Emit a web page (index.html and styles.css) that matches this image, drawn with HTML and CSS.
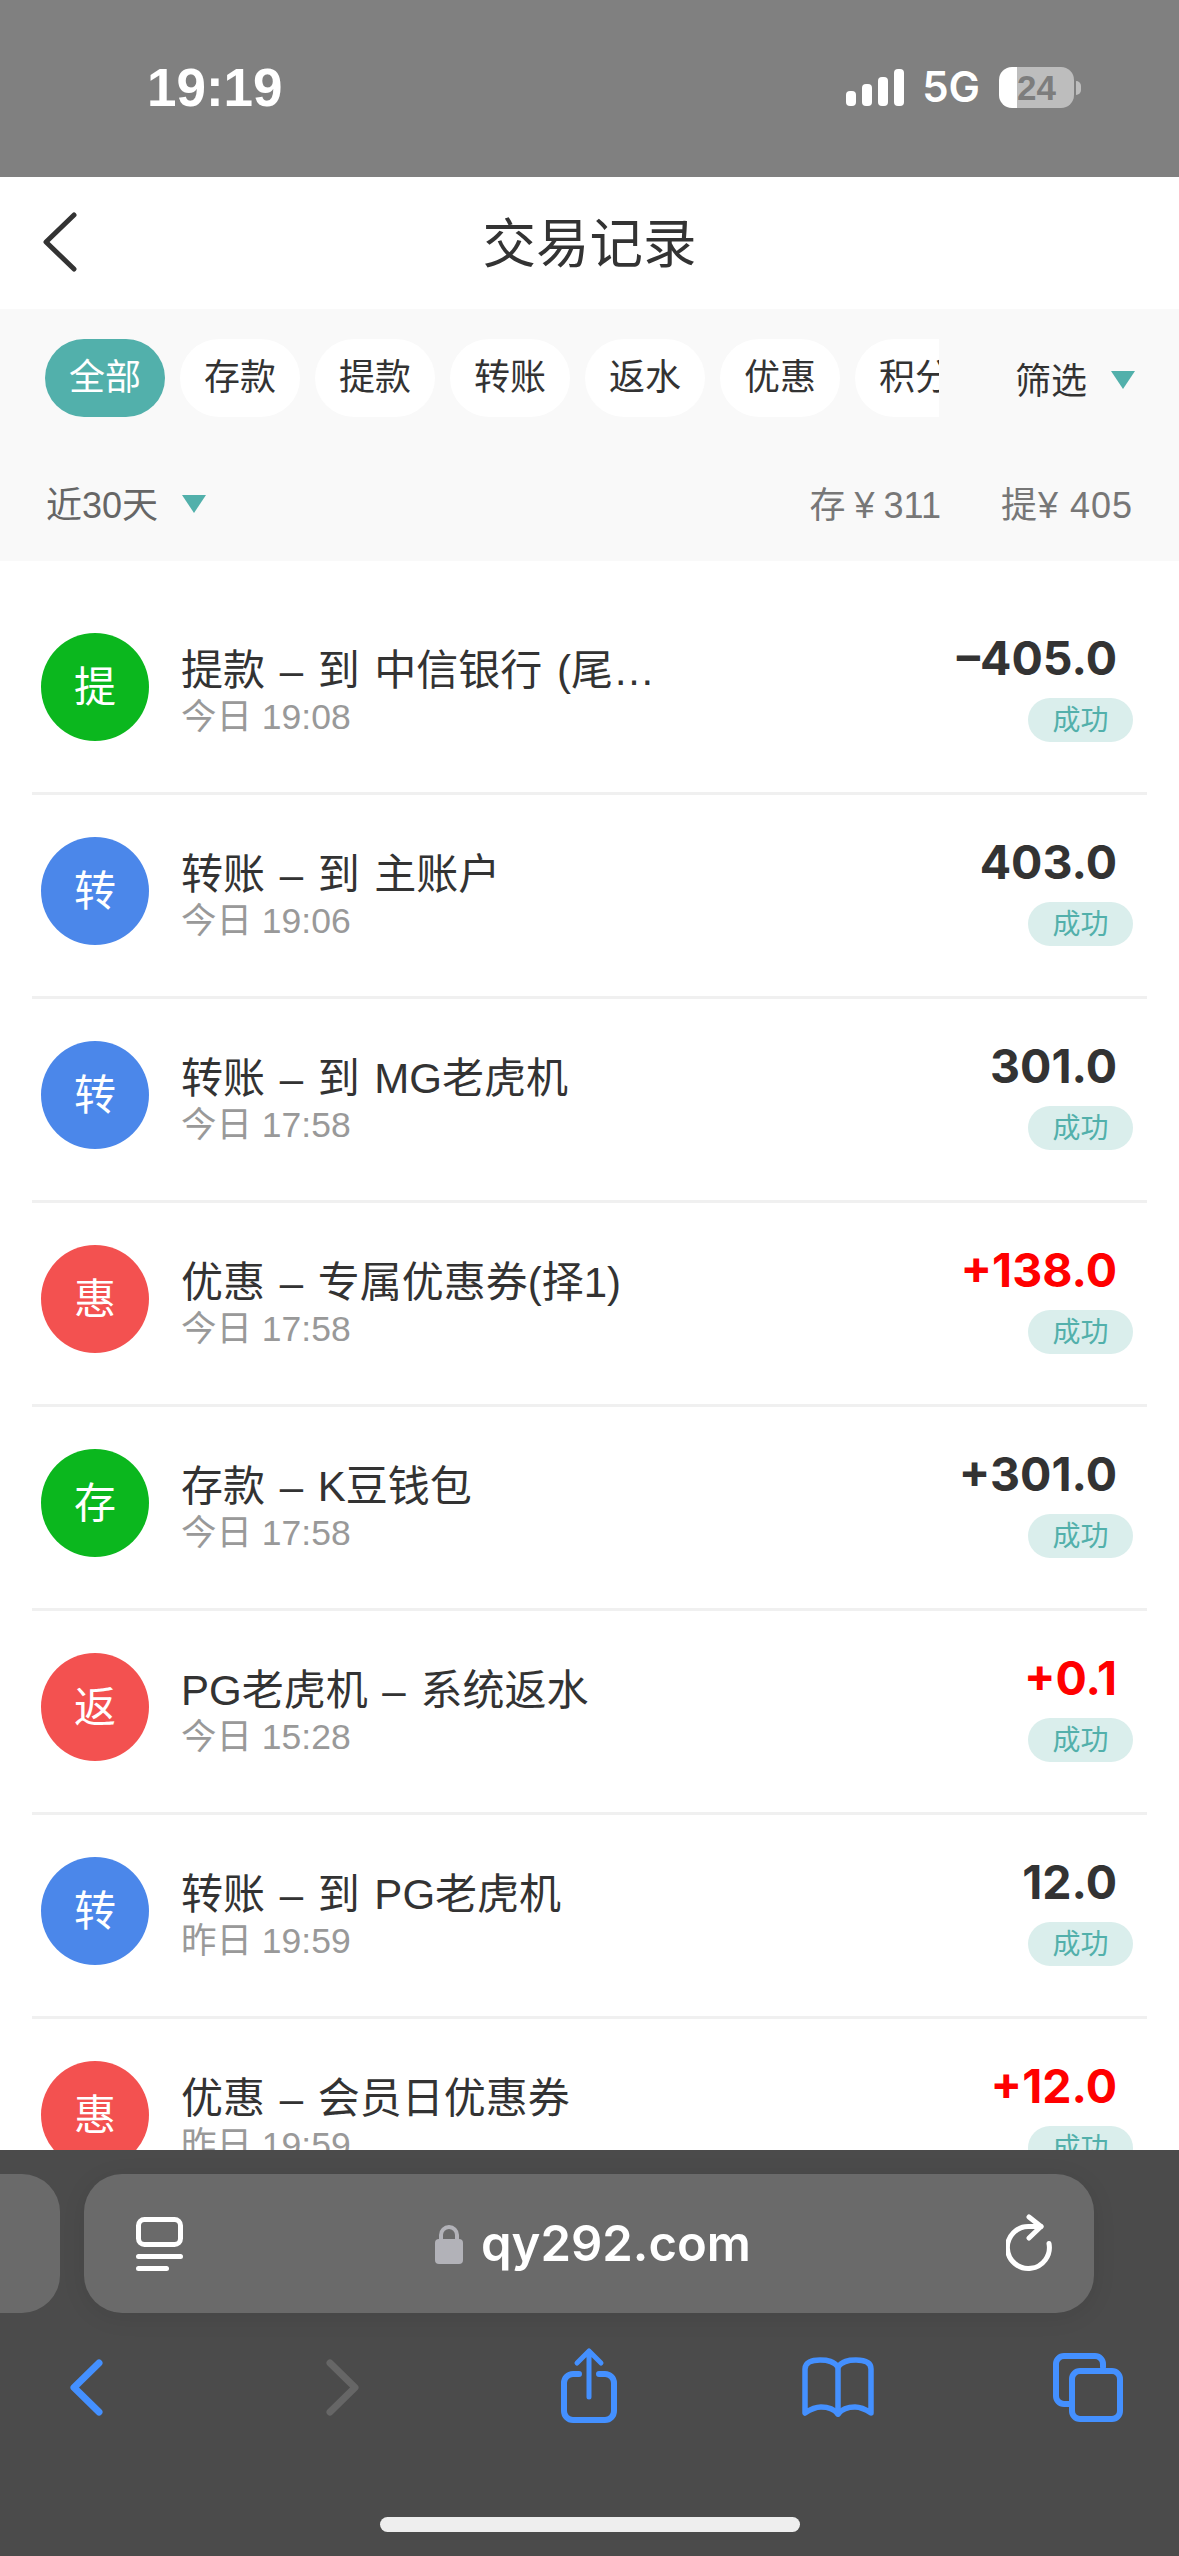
FILE: index.html

```html
<!DOCTYPE html>
<html lang="zh-CN">
<head>
  <meta charset="UTF-8" />
  <meta name="viewport" content="width=device-width, initial-scale=1" />
  <title>交易记录</title>
  <link rel="stylesheet" href="styles.css">
</head>
<body>
  <div class="page">
    <div class="status-bar">
      <span class="clock">19:19</span>
      <div class="status-right">
        <svg class="signal" width="58" height="37" viewBox="0 0 58 37">
          <rect x="0" y="22" width="10" height="15" rx="4" fill="#fff" />
          <rect x="16" y="15" width="10" height="22" rx="4" fill="#fff" />
          <rect x="32" y="8" width="10" height="29" rx="4" fill="#fff" />
          <rect x="48" y="0" width="10" height="37" rx="4" fill="#fff" />
        </svg>
        <span class="network">5G</span>
        <div class="battery"><span class="battery-level">24</span></div>
        <span class="battery-nub"></span>
      </div>
    </div>

    <div class="header">
      <svg class="back" width="36" height="60" viewBox="0 0 36 60">
        <polyline points="33,3 5,30 33,57" fill="none" stroke="#333" stroke-width="5" stroke-linecap="round" stroke-linejoin="round" />
      </svg>
      <h1>交易记录</h1>
    </div>

    <div class="filters">
      <div class="filter-top">
        <div class="chips">
          <span class="chip active">全部</span>
          <span class="chip">存款</span>
          <span class="chip">提款</span>
          <span class="chip">转账</span>
          <span class="chip">返水</span>
          <span class="chip">优惠</span>
          <span class="chip">积分</span>
        </div>
        <span class="filter-btn">筛选</span>
        <span class="caret caret-filter"></span>
      </div>
      <div class="filter-bottom">
        <span class="range">近30天</span>
        <span class="caret caret-range"></span>
        <span class="total total-in">存 ¥ 311</span>
        <span class="total total-out">提¥ 405</span>
      </div>
    </div>

    <div class="list">
      <div class="row">
        <div class="avatar green">提</div>
        <div class="info">
          <div class="name">提款 – 到 中信银行 (尾…</div>
          <div class="time">今日 19:08</div>
        </div>
        <div class="side">
          <div class="amount">–405.0</div>
          <div class="badge">成功</div>
        </div>
      </div>
      <div class="row">
        <div class="avatar blue">转</div>
        <div class="info">
          <div class="name">转账 – 到 主账户</div>
          <div class="time">今日 19:06</div>
        </div>
        <div class="side">
          <div class="amount">403.0</div>
          <div class="badge">成功</div>
        </div>
      </div>
      <div class="row">
        <div class="avatar blue">转</div>
        <div class="info">
          <div class="name">转账 – 到 MG老虎机</div>
          <div class="time">今日 17:58</div>
        </div>
        <div class="side">
          <div class="amount">301.0</div>
          <div class="badge">成功</div>
        </div>
      </div>
      <div class="row">
        <div class="avatar red">惠</div>
        <div class="info">
          <div class="name">优惠 – 专属优惠券(择1)</div>
          <div class="time">今日 17:58</div>
        </div>
        <div class="side">
          <div class="amount plus">+138.0</div>
          <div class="badge">成功</div>
        </div>
      </div>
      <div class="row">
        <div class="avatar green">存</div>
        <div class="info">
          <div class="name">存款 – K豆钱包</div>
          <div class="time">今日 17:58</div>
        </div>
        <div class="side">
          <div class="amount">+301.0</div>
          <div class="badge">成功</div>
        </div>
      </div>
      <div class="row">
        <div class="avatar red">返</div>
        <div class="info">
          <div class="name">PG老虎机 – 系统返水</div>
          <div class="time">今日 15:28</div>
        </div>
        <div class="side">
          <div class="amount plus">+0.1</div>
          <div class="badge">成功</div>
        </div>
      </div>
      <div class="row">
        <div class="avatar blue">转</div>
        <div class="info">
          <div class="name">转账 – 到 PG老虎机</div>
          <div class="time">昨日 19:59</div>
        </div>
        <div class="side">
          <div class="amount">12.0</div>
          <div class="badge">成功</div>
        </div>
      </div>
      <div class="row">
        <div class="avatar red">惠</div>
        <div class="info">
          <div class="name">优惠 – 会员日优惠券</div>
          <div class="time">昨日 19:59</div>
        </div>
        <div class="side">
          <div class="amount plus">+12.0</div>
          <div class="badge">成功</div>
        </div>
      </div>
    </div>

    <div class="toolbar">
      <div class="address-row">
        <div class="tab-stub"></div>
        <div class="address">
          <svg class="reader" width="47" height="54" viewBox="0 0 47 54">
            <rect x="2.5" y="2.5" width="42" height="25" rx="6" fill="none" stroke="#fff" stroke-width="5" />
            <rect x="0" y="37" width="47" height="5" rx="2.5" fill="#fff" />
            <rect x="0" y="49" width="33" height="5" rx="2.5" fill="#fff" />
          </svg>
          <div class="url">
            <svg class="lock" width="28" height="40" viewBox="0 0 28 40">
              <path d="M6 16 V11 a8 8 0 0 1 16 0 V16" fill="none" stroke="#b2b2b8" stroke-width="4" />
              <rect x="0" y="15" width="28" height="25" rx="4" fill="#b2b2b8" />
            </svg>
            <span>qy292.com</span>
          </div>
          <svg class="reload" width="46" height="60" viewBox="0 0 46 60">
            <path d="M35 12.5 H23 A21 21 0 1 0 43 29.5" fill="none" stroke="#fff" stroke-width="5" stroke-linecap="round" stroke-linejoin="round" />
            <polyline points="23,3 35,12.5 23,24" fill="none" stroke="#fff" stroke-width="5" stroke-linecap="round" stroke-linejoin="round" />
          </svg>
        </div>
      </div>
      <div class="nav">
        <svg width="80" height="80" viewBox="0 0 80 80">
          <polyline points="53,16 28,40.5 53,65" fill="none" stroke="#4490ff" stroke-width="7" stroke-linecap="round" stroke-linejoin="round" />
        </svg>
        <svg width="80" height="80" viewBox="0 0 80 80">
          <polyline points="27,16 52,40.5 27,65" fill="none" stroke="#666" stroke-width="7" stroke-linecap="round" stroke-linejoin="round" />
        </svg>
        <svg width="80" height="80" viewBox="0 0 80 80" fill="none" stroke="#4490ff" stroke-linecap="round" stroke-linejoin="round">
          <path d="M30 27 H24 a9 9 0 0 0 -9 9 V64 a9 9 0 0 0 9 9 H56 a9 9 0 0 0 9 -9 V36 a9 9 0 0 0 -9 -9 H50" stroke-width="6" />
          <path d="M40 50 V4 M28 16 L40 4 L52 16" stroke-width="5" />
        </svg>
        <svg width="80" height="80" viewBox="0 0 80 80" fill="none" stroke="#4490ff" stroke-width="5.5" stroke-linecap="round" stroke-linejoin="round">
          <path d="M7 66 V22 C7 15 14 13 22 13 C30 13 36 14 40 20 C44 14 50 13 58 13 C66 13 73 15 73 22 V66 C67 62 63 60 57 60 C50 60 44 62 40 67 C36 62 30 60 23 60 C17 60 13 62 7 66 Z" />
          <path d="M40 20 V67" />
        </svg>
        <svg width="80" height="80" viewBox="0 0 80 80" fill="none" stroke="#4490ff" stroke-width="6" stroke-linecap="round" stroke-linejoin="round">
          <path d="M55 20 V17 a8 8 0 0 0 -8 -8 H16 a8 8 0 0 0 -8 8 V49 a8 8 0 0 0 8 8 H22" />
          <rect x="24" y="24" width="48" height="48" rx="8" />
        </svg>
      </div>
      <div class="home-bar"></div>
    </div>
  </div>
</body>
</html>
```

FILE: styles.css

```css
* { margin: 0; padding: 0; box-sizing: border-box; }
html, body {
  height: 100%;
  overflow: hidden;
  font-family: 'Liberation Sans', 'Noto Sans CJK SC', sans-serif;
  color: #333;
  background: #fff;
}
.page {
  height: 100vh;
  display: flex;
  flex-direction: column;
}

/* status bar */
.status-bar {
  height: 177px;
  flex: none;
  background: #808080;
  color: #fff;
  display: flex;
  justify-content: space-between;
  padding: 62px 98px 0 147px;
}
.clock {
  font-size: 53px;
  font-weight: 700;
  line-height: 52px;
}
.status-right {
  display: flex;
  align-items: flex-start;
  padding-top: 5px;
}
.signal { margin-top: 2px; }
.network {
  font-family: 'Inter', sans-serif;
  font-size: 42px;
  font-weight: 600;
  line-height: 40px;
  margin: 0 19px 0 18px;
}
.battery {
  width: 75px;
  height: 41px;
  border-radius: 13px;
  background: linear-gradient(to right, #fff 24%, #bdbdbd 24%);
  text-align: center;
  color: #7d7d7d;
  font-size: 35px;
  font-weight: 700;
  line-height: 41px;
}
.battery-nub {
  width: 5px;
  height: 14px;
  margin: 14px 0 0 2px;
  border-radius: 0 6px 6px 0;
  background: #bdbdbd;
}

/* header */
.header {
  height: 132px;
  flex: none;
  background: #fff;
  position: relative;
  display: flex;
  align-items: center;
  justify-content: center;
  padding-bottom: 8px;
}
.header h1 {
  font-size: 53.5px;
  font-weight: 400;
  color: #333;
}
.back {
  position: absolute;
  left: 41px;
  top: 35px;
}

/* filters */
.filters {
  height: 252px;
  flex: none;
  background: #f9f9f9;
  padding-top: 30px;
}
.filter-top {
  display: flex;
  align-items: center;
  padding-left: 45px;
}
.chips {
  width: 894px;
  flex: none;
  display: flex;
  gap: 15px;
  overflow: hidden;
}
.chip {
  width: 120px;
  height: 78px;
  flex: none;
  border-radius: 39px;
  background: #fff;
  text-align: center;
  font-size: 36px;
  line-height: 78px;
  color: #333;
}
.chip.active {
  background: #52b0ab;
  color: #fff;
}
.filter-btn {
  font-size: 36px;
  color: #333;
  margin-left: 76px;
}
.caret {
  width: 0;
  height: 0;
  border-left: 12px solid transparent;
  border-right: 12px solid transparent;
  border-top: 18px solid #52b0ab;
}
.caret-filter { margin: 4px 0 0 24px; }
.caret-range { margin: 3px 0 0 24px; }
.filter-bottom {
  display: flex;
  align-items: center;
  height: 50px;
  margin-top: 60px;
  padding: 0 46px;
  font-size: 36px;
}
.range { color: #666; }
.total { color: #777; }
.total-in { margin-left: auto; word-spacing: -1px; }
.total-out { margin-left: 60px; letter-spacing: 1px; }

/* transaction list */
.list {
  flex: 1;
  min-height: 0;
  overflow: hidden;
  padding: 30px 32px 0;
  background: #fff;
}
.row {
  height: 204px;
  border-bottom: 3px solid #f0f0f0;
  padding: 42px 14px 0 9px;
  display: flex;
  align-items: flex-start;
}
.avatar {
  width: 108px;
  height: 108px;
  flex: none;
  border-radius: 50%;
  text-align: center;
  color: #fff;
  font-size: 42px;
  line-height: 110px;
}
.green { background: #0bb71e; }
.blue { background: #4b87ea; }
.red { background: #f35150; }
.info {
  margin-left: 32px;
  flex: 1;
}
.name {
  font-size: 42px;
  line-height: 50px;
  margin-top: 13px;
  word-spacing: 3px;
  color: #333;
}
.time {
  font-size: 35.5px;
  line-height: 44px;
  margin-top: -1px;
  color: #999;
}
.side {
  display: flex;
  flex-direction: column;
  align-items: flex-end;
}
.amount {
  font-family: 'Inter', sans-serif;
  font-size: 46.5px;
  font-weight: 700;
  line-height: 50px;
  margin-right: 16px;
  color: #333;
}
.amount.plus { color: #f00; }
.badge {
  width: 105px;
  height: 44px;
  margin-top: 15px;
  border-radius: 22px;
  background: #daeeec;
  color: #52b0ab;
  font-size: 28px;
  line-height: 45px;
  text-align: center;
}

/* browser toolbar */
.toolbar {
  height: 406px;
  flex: none;
  background: #4b4b4b;
  padding-top: 24px;
}
.address-row {
  display: flex;
  gap: 24px;
  height: 139px;
}
.tab-stub {
  width: 60px;
  border-radius: 0 38px 38px 0;
  background: #6a6a6a;
}
.address {
  width: 1010px;
  border-radius: 38px;
  background: #6a6a6a;
  box-shadow: 0 4px 24px rgba(0, 0, 0, 0.08);
  display: flex;
  align-items: center;
  justify-content: space-between;
  padding: 0 42px 0 52px;
}
.url {
  display: flex;
  align-items: center;
  gap: 18px;
  margin-right: 3px;
  color: #fff;
  font-family: 'Inter', sans-serif;
  font-size: 49px;
  font-weight: 600;
}
.nav {
  display: grid;
  grid-template-columns: 257px 246px 249px 250px 80px;
  padding-left: 46px;
  margin-top: 34px;
}
.home-bar {
  width: 420px;
  height: 15px;
  margin: 90px auto 0;
  border-radius: 8px;
  background: #eee;
}
```
